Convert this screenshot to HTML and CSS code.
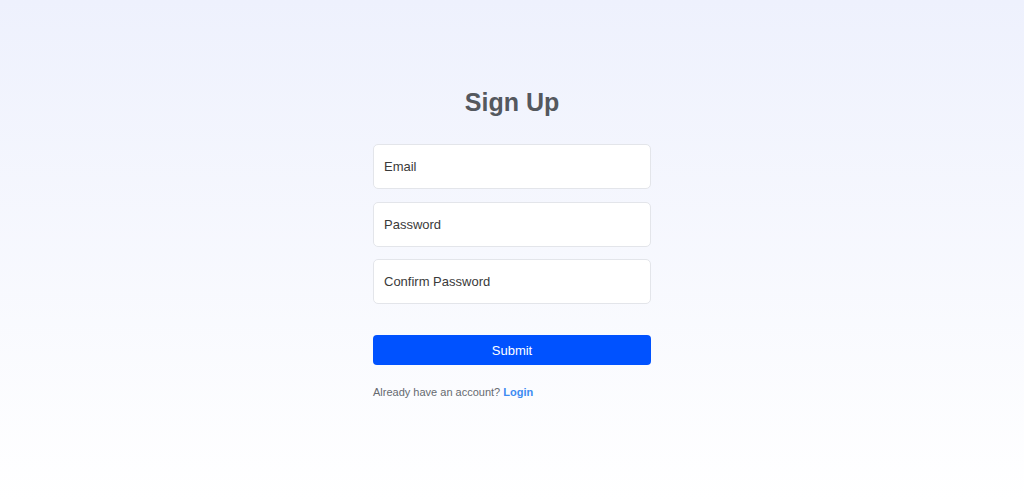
FILE: index.html
```html
<!DOCTYPE html>
<html>
<head>
<meta charset="utf-8">
<link rel="stylesheet" href="styles.css">
</head>
<body>
<main class="page">
  <form class="card">
    <h1 class="title">Sign Up</h1>
    <div class="fields">
      <input class="field" type="email" placeholder="Email">
      <input class="field" type="password" placeholder="Password">
      <input class="field" type="password" placeholder="Confirm Password">
    </div>
    <button class="submit" type="button">Submit</button>
    <p class="note">Already have an account? <a class="link" href="#">Login</a></p>
  </form>
</main>
</body>
</html>
```

FILE: styles.css
```css
html, body {
  margin: 0;
  padding: 0;
  height: 100%;
}
body {
  background: linear-gradient(to bottom, #eef1fd 0%, #ffffff 100%);
  font-family: "Liberation Sans", Arial, sans-serif;
}
.page {
  display: flex;
  justify-content: center;
  padding-top: 88px;
}
.card {
  width: 278px;
  display: flex;
  flex-direction: column;
}
.title {
  margin: 0 0 27px;
  text-align: center;
  font-size: 25px;
  line-height: 29px;
  font-weight: bold;
  color: #54585e;
}
.fields {
  display: flex;
  flex-direction: column;
  gap: 12.5px;
}
.field {
  box-sizing: border-box;
  height: 45px;
  width: 100%;
  border: 1px solid #e3e5ea;
  border-radius: 5px;
  background: #ffffff;
  padding: 0 10px;
  font-family: "Liberation Sans", Arial, sans-serif;
  font-size: 13px;
  color: #333;
  outline: none;
}
.field::placeholder {
  color: #3a3a3a;
  opacity: 1;
}
.submit {
  margin-top: 31px;
  height: 30px;
  border: none;
  border-radius: 4px;
  background: #0052ff;
  color: #ffffff;
  font-family: "Liberation Sans", Arial, sans-serif;
  font-size: 13px;
  cursor: pointer;
}
.note {
  margin: 21px 0 0;
  font-size: 11px;
  line-height: 13px;
  color: #666a70;
}
.link {
  color: #3d8bf2;
  font-weight: bold;
  text-decoration: none;
}
```
